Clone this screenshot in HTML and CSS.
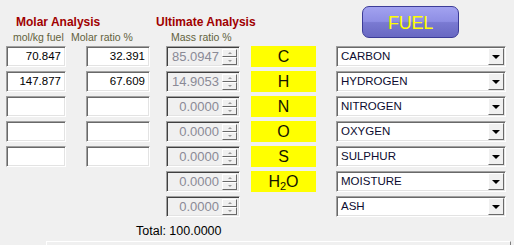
FILE: index.html
```html
<!DOCTYPE html>
<html lang="en">
<head>
    <meta charset="UTF-8">
    <meta name="viewport" content="width=device-width, initial-scale=1.0">
    <title>Fuel Analysis</title>
    <link rel="stylesheet" href="styles.css">
</head>
<body>

    <div class="header">
        <div class="labels">
            <div class="titles">
                <span class="title title-molar">Molar Analysis</span>
                <span class="title">Ultimate Analysis</span>
            </div>
            <div class="subtitles">
                <span class="sub sub-molkg">mol/kg fuel</span>
                <span class="sub sub-ratio">Molar ratio %</span>
                <span class="sub">Mass ratio %</span>
            </div>
        </div>
        <button class="fuel-btn" type="button">FUEL</button>
    </div>

    <div class="grid">
        <!-- carbon -->
        <div class="num num-a">70.847</div>
        <div class="num num-b">32.391</div>
        <div class="spin"><span class="spin-val">85.0947</span><span class="spin-btns"><i class="up"></i><i class="down"></i></span></div>
        <div class="elem">C</div>
        <div class="select">CARBON<span class="drop"></span></div>

        <!-- hydrogen -->
        <div class="num num-a">147.877</div>
        <div class="num num-b">67.609</div>
        <div class="spin"><span class="spin-val">14.9053</span><span class="spin-btns"><i class="up"></i><i class="down"></i></span></div>
        <div class="elem">H</div>
        <div class="select">HYDROGEN<span class="drop"></span></div>

        <!-- nitrogen -->
        <div class="num num-a"></div>
        <div class="num num-b"></div>
        <div class="spin"><span class="spin-val">0.0000</span><span class="spin-btns"><i class="up"></i><i class="down"></i></span></div>
        <div class="elem">N</div>
        <div class="select">NITROGEN<span class="drop"></span></div>

        <!-- oxygen -->
        <div class="num num-a"></div>
        <div class="num num-b"></div>
        <div class="spin"><span class="spin-val">0.0000</span><span class="spin-btns"><i class="up"></i><i class="down"></i></span></div>
        <div class="elem">O</div>
        <div class="select">OXYGEN<span class="drop"></span></div>

        <!-- sulphur -->
        <div class="num num-a"></div>
        <div class="num num-b"></div>
        <div class="spin"><span class="spin-val">0.0000</span><span class="spin-btns"><i class="up"></i><i class="down"></i></span></div>
        <div class="elem">S</div>
        <div class="select">SULPHUR<span class="drop"></span></div>

        <!-- moisture -->
        <div class="empty"></div>
        <div class="empty"></div>
        <div class="spin"><span class="spin-val">0.0000</span><span class="spin-btns"><i class="up"></i><i class="down"></i></span></div>
        <div class="elem">H<sub>2</sub>O</div>
        <div class="select">MOISTURE<span class="drop"></span></div>

        <!-- ash -->
        <div class="empty"></div>
        <div class="empty"></div>
        <div class="spin"><span class="spin-val">0.0000</span><span class="spin-btns"><i class="up"></i><i class="down"></i></span></div>
        <div class="empty"></div>
        <div class="select">ASH<span class="drop"></span></div>
    </div>

    <div class="total">Total: 100.0000</div>
    <div class="lower-panel"></div>

</body>
</html>
```

FILE: styles.css
```css
body {
    font-family: "Liberation Sans", Arial, sans-serif;
    background: #f0f0f0;
    margin: 0;
    padding: 0;
    overflow: hidden;
}

.header {
    display: flex;
    height: 46px;
    box-sizing: border-box;
    padding-top: 6px;
}

.labels {
    width: 362px;
    padding-top: 9px;
}

.titles {
    display: flex;
    padding-left: 16px;
    height: 15px;
}

.title {
    color: #a00000;
    font-weight: bold;
    font-size: 12px;
    line-height: 15px;
}

.title-molar {
    width: 140px;
}

.subtitles {
    display: flex;
    padding-left: 13px;
    margin-top: 1px;
}

.sub {
    color: #62623c;
    font-size: 10.5px;
    line-height: 12px;
}

.sub-molkg {
    width: 58px;
}

.sub-ratio {
    width: 100px;
}

.fuel-btn {
    width: 97px;
    height: 32px;
    border: 1px solid #3c3c98;
    border-radius: 7px;
    background: linear-gradient(to bottom, #a2a2f0 0%, #8e8ee4 48%, #7a7ad2 52%, #6868c2 100%);
    color: #ffff00;
    font-family: "Liberation Sans", Arial, sans-serif;
    font-size: 18px;
    padding: 0;
    padding-top: 2px;
    letter-spacing: -0.3px;
}

.grid {
    display: grid;
    grid-template-columns: 80px 80px 85px 85px 170px;
    grid-auto-rows: 21px;
    row-gap: 4px;
    padding-left: 6px;
}

.num, .spin, .select {
    box-sizing: border-box;
    height: 21px;
    border: 1px solid;
    border-color: #a0a0a0 #ffffff #ffffff #a0a0a0;
    box-shadow: inset 1px 1px 0 #696969, inset -1px -1px 0 #e3e3e3;
}

.num {
    background: #fff;
    text-align: right;
    font-size: 11.5px;
    line-height: 19px;
    padding-right: 4px;
    color: #000;
}

.num-a {
    width: 60px;
}

.num-b {
    width: 64px;
}

.spin {
    width: 74px;
    display: flex;
    align-items: center;
    background: #f0f0f0;
    box-shadow: inset 1px 1px 0 #404040, inset -1px -1px 0 #e3e3e3;
}

.spin-val {
    flex: 1;
    text-align: right;
    color: #8a8a96;
    font-size: 13px;
    padding-right: 3px;
    line-height: 19px;
}

.spin-btns {
    display: flex;
    flex-direction: column;
    width: 15px;
    margin-right: 2px;
}

.spin-btns i {
    position: relative;
    display: block;
    height: 8px;
    box-sizing: border-box;
    border: 1px solid;
    border-color: #ffffff #696969 #696969 #ffffff;
    background: #f0f0f0;
}

.spin-btns i::after {
    content: "";
    position: absolute;
    left: 5px;
    top: 2px;
    border-left: 2px solid transparent;
    border-right: 2px solid transparent;
}

.spin-btns .up::after {
    border-bottom: 2px solid #9a9a9a;
}

.spin-btns .down::after {
    border-top: 2px solid #9a9a9a;
}

.elem {
    width: 65px;
    background: #ffff00;
    color: #141400;
    text-align: center;
    font-size: 16px;
    line-height: 21px;
}

.elem sub {
    font-size: 11px;
    vertical-align: -3px;
    line-height: 0;
}

.select {
    width: 170px;
    background: #fff;
    color: #0c0c30;
    font-size: 11.5px;
    line-height: 19px;
    padding-left: 4px;
    display: flex;
    justify-content: space-between;
    padding-right: 1px;
}

.drop {
    position: relative;
    width: 16px;
    height: 17px;
    margin-top: 1px;
    box-sizing: border-box;
    border: 1px solid;
    border-color: #ffffff #696969 #696969 #ffffff;
    background: #f0f0f0;
}

.drop::after {
    content: "";
    position: absolute;
    left: 3px;
    top: 6px;
    border-left: 4px solid transparent;
    border-right: 4px solid transparent;
    border-top: 4px solid #000;
}

.total {
    padding-left: 136px;
    margin-top: 7px;
    font-size: 12.5px;
    line-height: 14px;
    color: #000;
}

.lower-panel {
    margin-top: 3px;
    margin-left: 46px;
    width: 465px;
    height: 10px;
    box-sizing: border-box;
    border-top: 1px solid #fff;
    border-left: 1px solid #fff;
    border-right: 1px solid #808080;
}
```
